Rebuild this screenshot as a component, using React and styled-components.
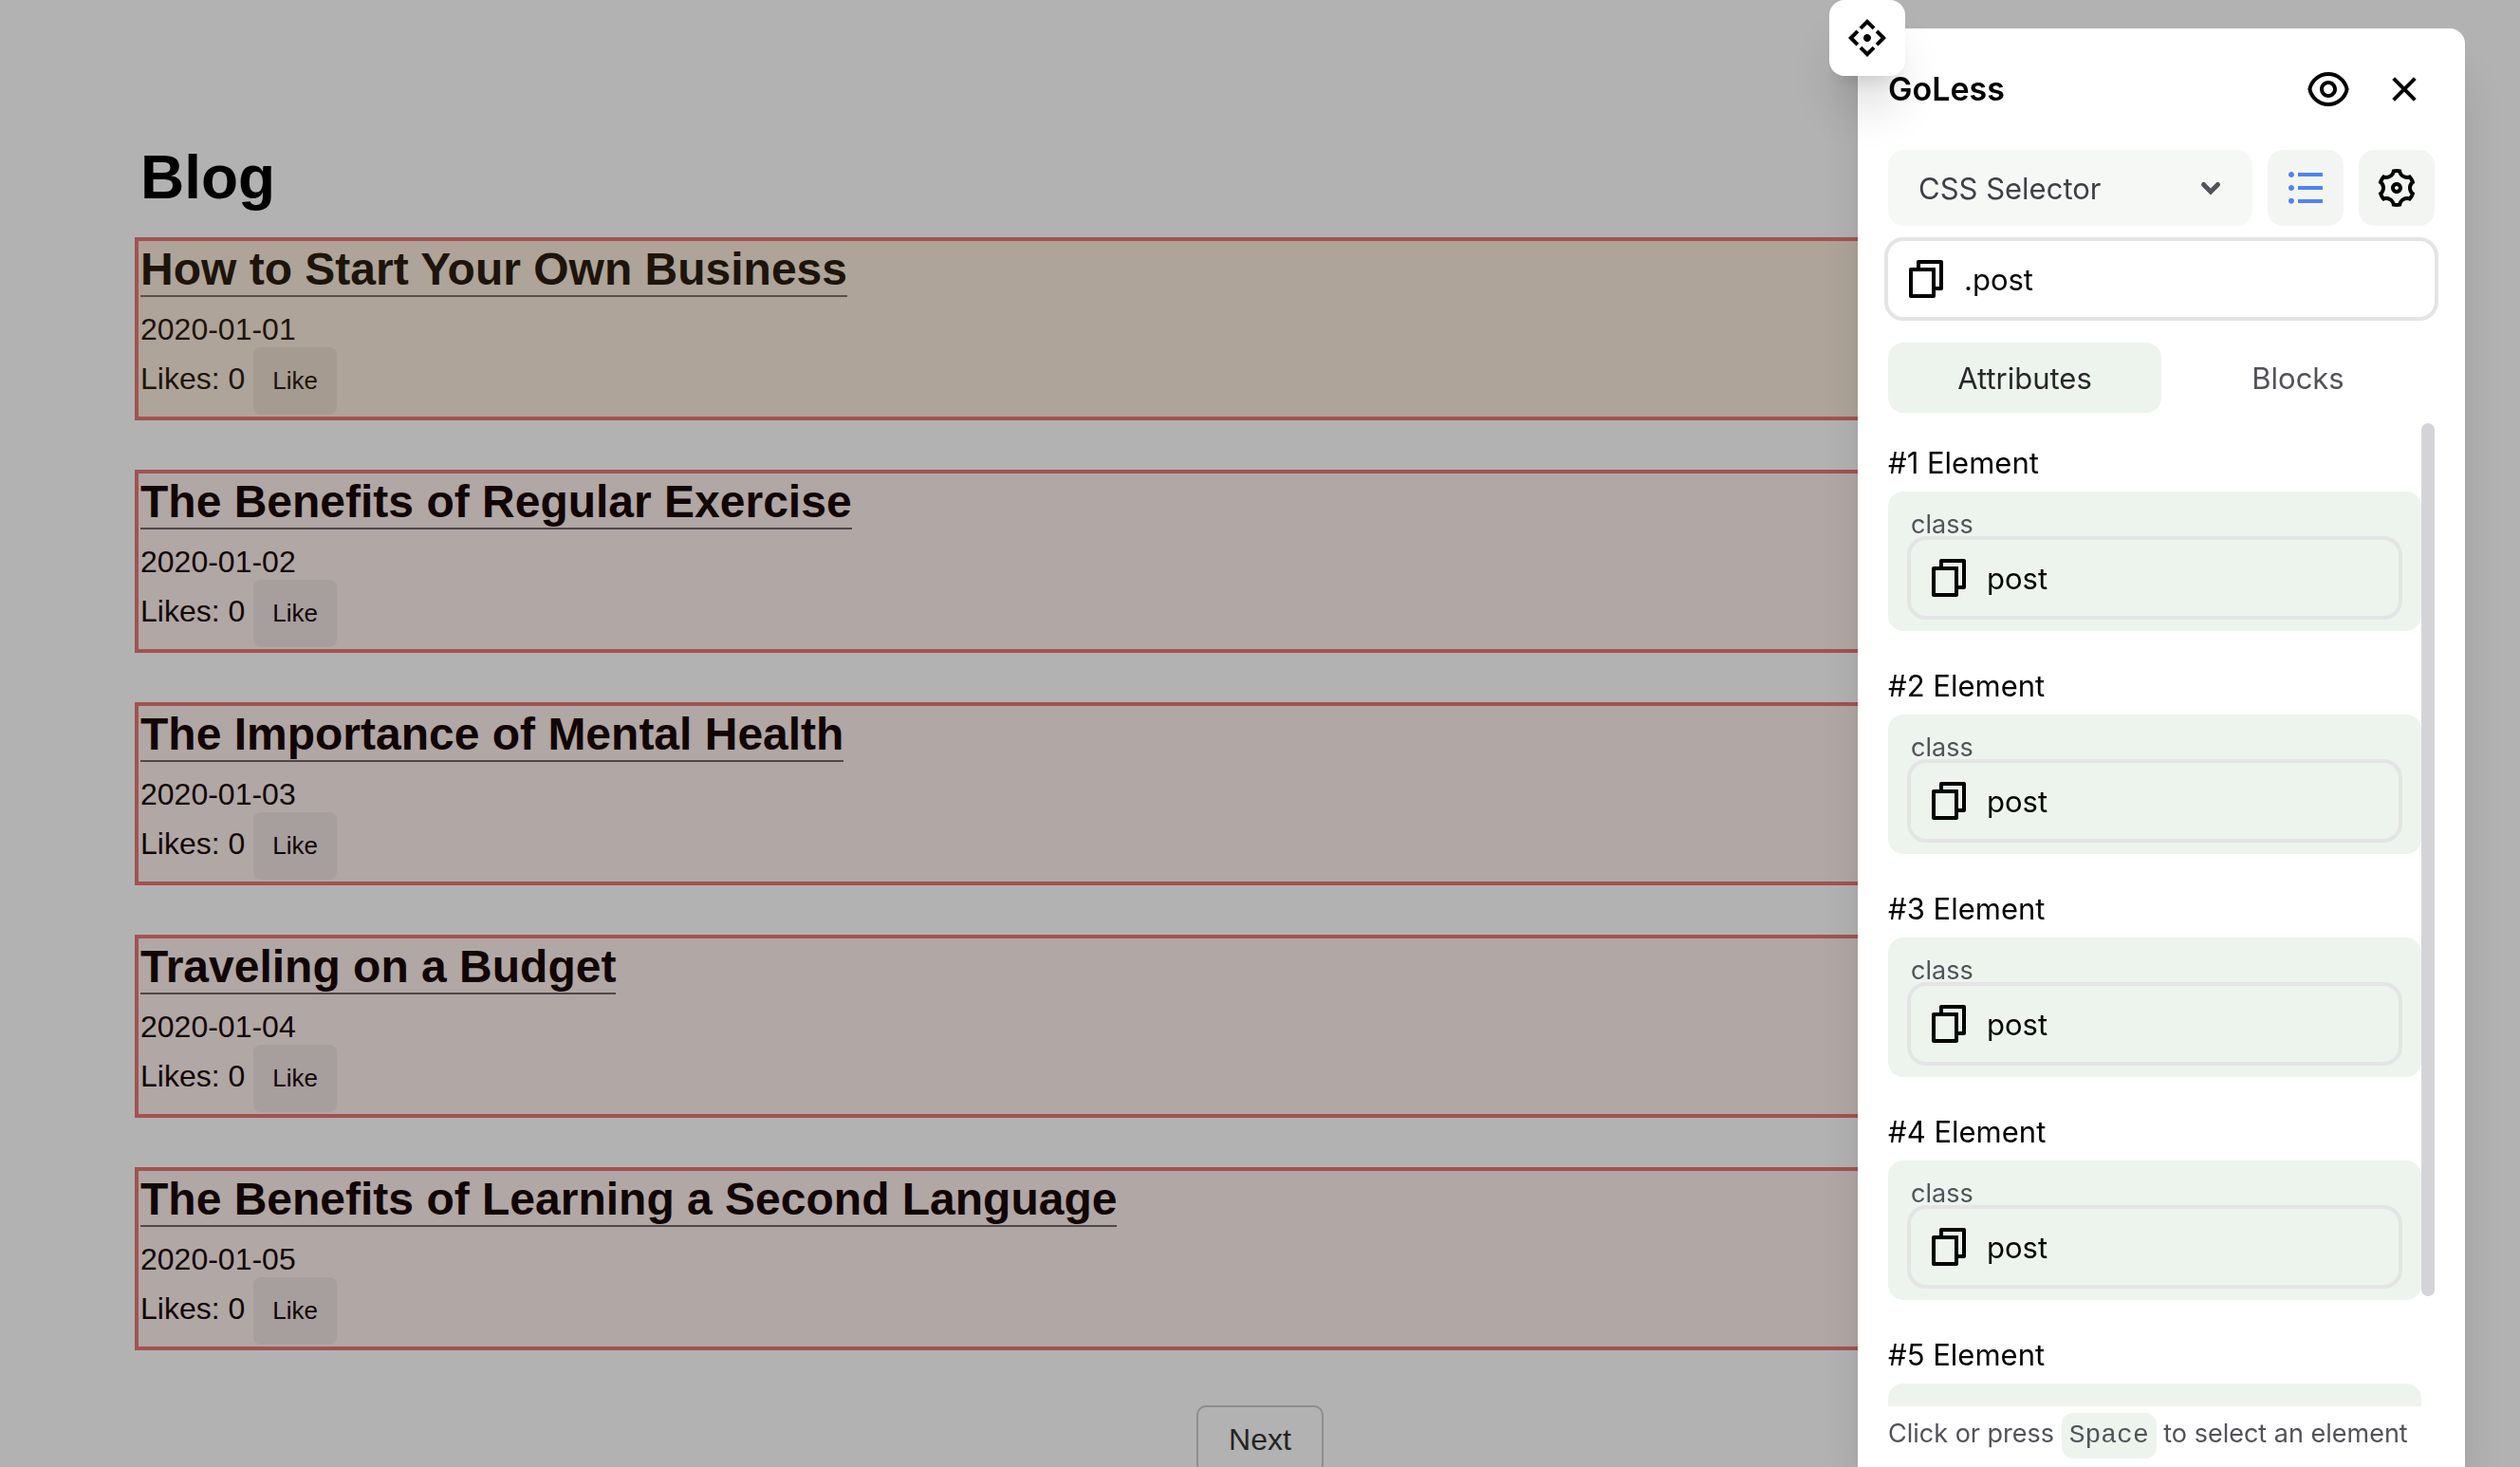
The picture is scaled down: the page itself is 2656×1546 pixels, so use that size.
import React from 'react';
import styled, { createGlobalStyle } from 'styled-components';
import {
  RiDragMoveLine,
  RiEyeLine,
  RiCloseLine,
  RiListUnordered,
  RiSettings3Line,
  RiFileCopyLine,
} from 'react-icons/ri';

const GlobalStyle = createGlobalStyle`
  * {
    box-sizing: border-box;
  }
  html, body, #root {
    height: 100%;
  }
  body {
    margin: 0;
    overflow: hidden;
    background: #b2b2b2;
    color: #000;
  }
  button, input, select {
    font-family: inherit;
    color: inherit;
    border: 0;
    margin: 0;
  }
`;

const shadow = '0 40px 50px -10px rgba(0, 0, 0, 0.15), 0 16px 20px -12px rgba(0, 0, 0, 0.15)';

const Page = styled.div`
  height: 100%;
  overflow: hidden;
  font-family: 'Liberation Sans', Arial, sans-serif;
  font-size: 32px;
`;

const Blog = styled.main`
  display: flex;
  flex-direction: column;
  padding: 150px 142px 0;
`;

const BlogTitle = styled.h1`
  margin: 0 0 26px 6px;
  font-size: 64px;
  line-height: 74px;
`;

const Post = styled.article`
  display: flex;
  flex-direction: column;
  align-items: flex-start;
  height: 193px;
  margin-bottom: 52px;
  padding: 0 2px;
  border: 4px solid #a25351;
  background: ${(props) => (props.$active ? '#aea499' : '#b1a7a5')};
  color: ${(props) => (props.$active ? '#1e140b' : '#120505')};
`;

const PostTitle = styled.h2`
  margin: 0;
  padding-top: 2px;
  font-size: 48px;
  line-height: 55px;
  border-bottom: 2px solid ${(props) => (props.$active ? '#5c5047' : '#51474a')};

  a {
    color: inherit;
    text-decoration: none;
  }
`;

const PostDate = styled.time`
  margin: 16px 0 1px;
  line-height: 36px;
`;

const Likes = styled.div`
  display: flex;
  align-items: baseline;
  gap: 9px;
`;

const LikeButton = styled.button`
  height: 71px;
  padding: 0 20px;
  border-radius: 8px;
  background: ${(props) => (props.$active ? '#a59b91' : '#a79e9e')};
  font-size: 26px;
`;

const NextButton = styled.button`
  align-self: center;
  height: 72px;
  margin-top: 6px;
  padding: 0 32px;
  border: 2px solid #8e8e8e;
  border-radius: 10px;
  background: transparent;
  color: #242424;
  font-size: 32px;
`;

const Panel = styled.aside`
  position: fixed;
  top: 30px;
  right: 58px;
  bottom: 0;
  display: flex;
  flex-direction: column;
  width: 640px;
  padding: 32px 32px 0;
  border-radius: 16px 16px 0 0;
  background: #fff;
  box-shadow: ${shadow};
  font-family: Inter, sans-serif;
`;

const DragHandle = styled.button`
  position: absolute;
  top: -30px;
  left: -30px;
  display: grid;
  place-items: center;
  width: 80px;
  height: 80px;
  padding: 0;
  border-radius: 16px;
  background: #fff;
  box-shadow: ${shadow};
`;

const Header = styled.header`
  display: flex;
  align-items: center;
  height: 64px;
  margin-bottom: 32px;
`;

const Name = styled.h2`
  flex: 1;
  margin: 0;
  font-size: 34px;
  font-weight: 600;
  line-height: 56px;
`;

const PlainButton = styled.button`
  display: grid;
  place-items: center;
  width: 64px;
  height: 64px;
  margin-left: 16px;
  padding: 0;
  background: transparent;
`;

const Toolbar = styled.div`
  display: flex;
  gap: 16px;
`;

const SelectWrap = styled.label`
  display: grid;
  flex: 1;
  align-items: center;

  > * {
    grid-area: 1 / 1;
  }
  svg {
    justify-self: end;
    margin-right: 24px;
    pointer-events: none;
  }
`;

const Select = styled.select`
  appearance: none;
  width: 100%;
  height: 80px;
  padding: 0 32px;
  border-radius: 16px;
  background: #f6f8f6;
  color: #3f3f46;
  font-size: 31px;
`;

const IconButton = styled.button`
  display: grid;
  place-items: center;
  width: 80px;
  height: 80px;
  padding: 0;
  border-radius: 16px;
  background: #f3f5f3;
  color: ${(props) => (props.$active ? '#4f83f1' : '#000')};
`;

const Field = styled.div`
  display: flex;
  align-items: center;
  gap: 16px;
  height: 88px;
  margin: ${(props) => (props.$inCard ? '0 -4px' : '12px -4px 0')};
  padding: 0 16px;
  border: 4px solid #e4e4e7;
  border-radius: 20px;
`;

const CopyButton = styled.button`
  display: flex;
  padding: 0;
  background: transparent;
`;

const FieldInput = styled.input`
  flex: 1;
  min-width: 0;
  height: 60px;
  padding: 0;
  background: transparent;
  outline: 0;
  font-size: 31px;
`;

const Tabs = styled.div`
  display: flex;
  margin-top: 23px;
`;

const Tab = styled.button`
  flex: 1;
  height: 74px;
  border-radius: 16px;
  background: ${(props) => (props.$active ? '#edf4ed' : 'transparent')};
  color: ${(props) => (props.$active ? '#27272a' : '#52525b')};
  font-size: 31px;
`;

const Scroller = styled.div`
  display: flex;
  flex: 1;
  min-height: 0;
  margin-top: 11px;
`;

const ElementList = styled.div`
  flex: 1;
  overflow: hidden;
  padding-top: 18px;
`;

const Scrollbar = styled.div`
  width: 14px;
  height: 920px;
  border-radius: 7px;
  background: #d4d4d8;
`;

const ElementItem = styled.section`
  margin-bottom: 34px;
`;

const ElementName = styled.h3`
  margin: 0 0 6px;
  font-size: 31px;
  font-weight: 400;
  line-height: 48px;
`;

const Card = styled.div`
  height: 147px;
  padding: 22px 24px 0;
  border-radius: 16px;
  background: #edf4ed;
`;

const CardLabel = styled.label`
  display: block;
  color: #52525b;
  font-size: 27px;
  line-height: 25px;
`;

const Footer = styled.footer`
  height: 64px;
  padding-top: 5px;
  color: #52525b;
  font-size: 27px;
  line-height: 48px;
  white-space: nowrap;
`;

const Key = styled.kbd`
  display: inline-block;
  padding: 0 8px;
  border-radius: 12px;
  background: #edf4ed;
  font-family: 'Liberation Mono', monospace;
  font-size: 28px;
`;

const posts = [
  { title: 'How to Start Your Own Business', date: '2020-01-01' },
  { title: 'The Benefits of Regular Exercise', date: '2020-01-02' },
  { title: 'The Importance of Mental Health', date: '2020-01-03' },
  { title: 'Traveling on a Budget', date: '2020-01-04' },
  { title: 'The Benefits of Learning a Second Language', date: '2020-01-05' },
];

const Chevron = () => (
  <svg width="40" height="40" viewBox="0 0 40 40" fill="none" stroke="#52525b" strokeWidth="5" strokeLinecap="round">
    <path d="M12.5 16.5 20 24l7.5-7.5" />
  </svg>
);

const App = () => {
  return (
    <Page>
      <GlobalStyle />
      <Blog>
        <BlogTitle>Blog</BlogTitle>
        {posts.map((post, i) => (
          <Post key={post.date} $active={i === 0}>
            <PostTitle $active={i === 0}>
              <a href="#post">{post.title}</a>
            </PostTitle>
            <PostDate>{post.date}</PostDate>
            <Likes>
              Likes: 0<LikeButton $active={i === 0}>Like</LikeButton>
            </Likes>
          </Post>
        ))}
        <NextButton>Next</NextButton>
      </Blog>

      <Panel>
        <DragHandle aria-label="Move">
          <RiDragMoveLine size={48} />
        </DragHandle>
        <Header>
          <Name>GoLess</Name>
          <PlainButton aria-label="Toggle highlight">
            <RiEyeLine size={48} />
          </PlainButton>
          <PlainButton aria-label="Close">
            <RiCloseLine size={48} />
          </PlainButton>
        </Header>
        <Toolbar>
          <SelectWrap>
            <Select aria-label="Selector type">
              <option>CSS Selector</option>
              <option>XPath</option>
            </Select>
            <Chevron />
          </SelectWrap>
          <IconButton $active aria-label="List">
            <RiListUnordered size={48} />
          </IconButton>
          <IconButton aria-label="Settings">
            <RiSettings3Line size={48} />
          </IconButton>
        </Toolbar>
        <Field>
          <CopyButton aria-label="Copy selector">
            <RiFileCopyLine size={48} />
          </CopyButton>
          <FieldInput aria-label="Selector" defaultValue=".post" />
        </Field>
        <Tabs>
          <Tab $active>Attributes</Tab>
          <Tab>Blocks</Tab>
        </Tabs>
        <Scroller>
          <ElementList>
            {posts.map((post, i) => (
              <ElementItem key={post.date}>
                <ElementName>#{i + 1} Element</ElementName>
                <Card>
                  <CardLabel htmlFor={`class-${i}`}>class</CardLabel>
                  <Field $inCard>
                    <CopyButton aria-label="Copy class">
                      <RiFileCopyLine size={48} />
                    </CopyButton>
                    <FieldInput id={`class-${i}`} defaultValue="post" />
                  </Field>
                </Card>
              </ElementItem>
            ))}
          </ElementList>
          <Scrollbar />
        </Scroller>
        <Footer>
          Click or press <Key>Space</Key> to select an element
        </Footer>
      </Panel>
    </Page>
  );
};

export default App;
